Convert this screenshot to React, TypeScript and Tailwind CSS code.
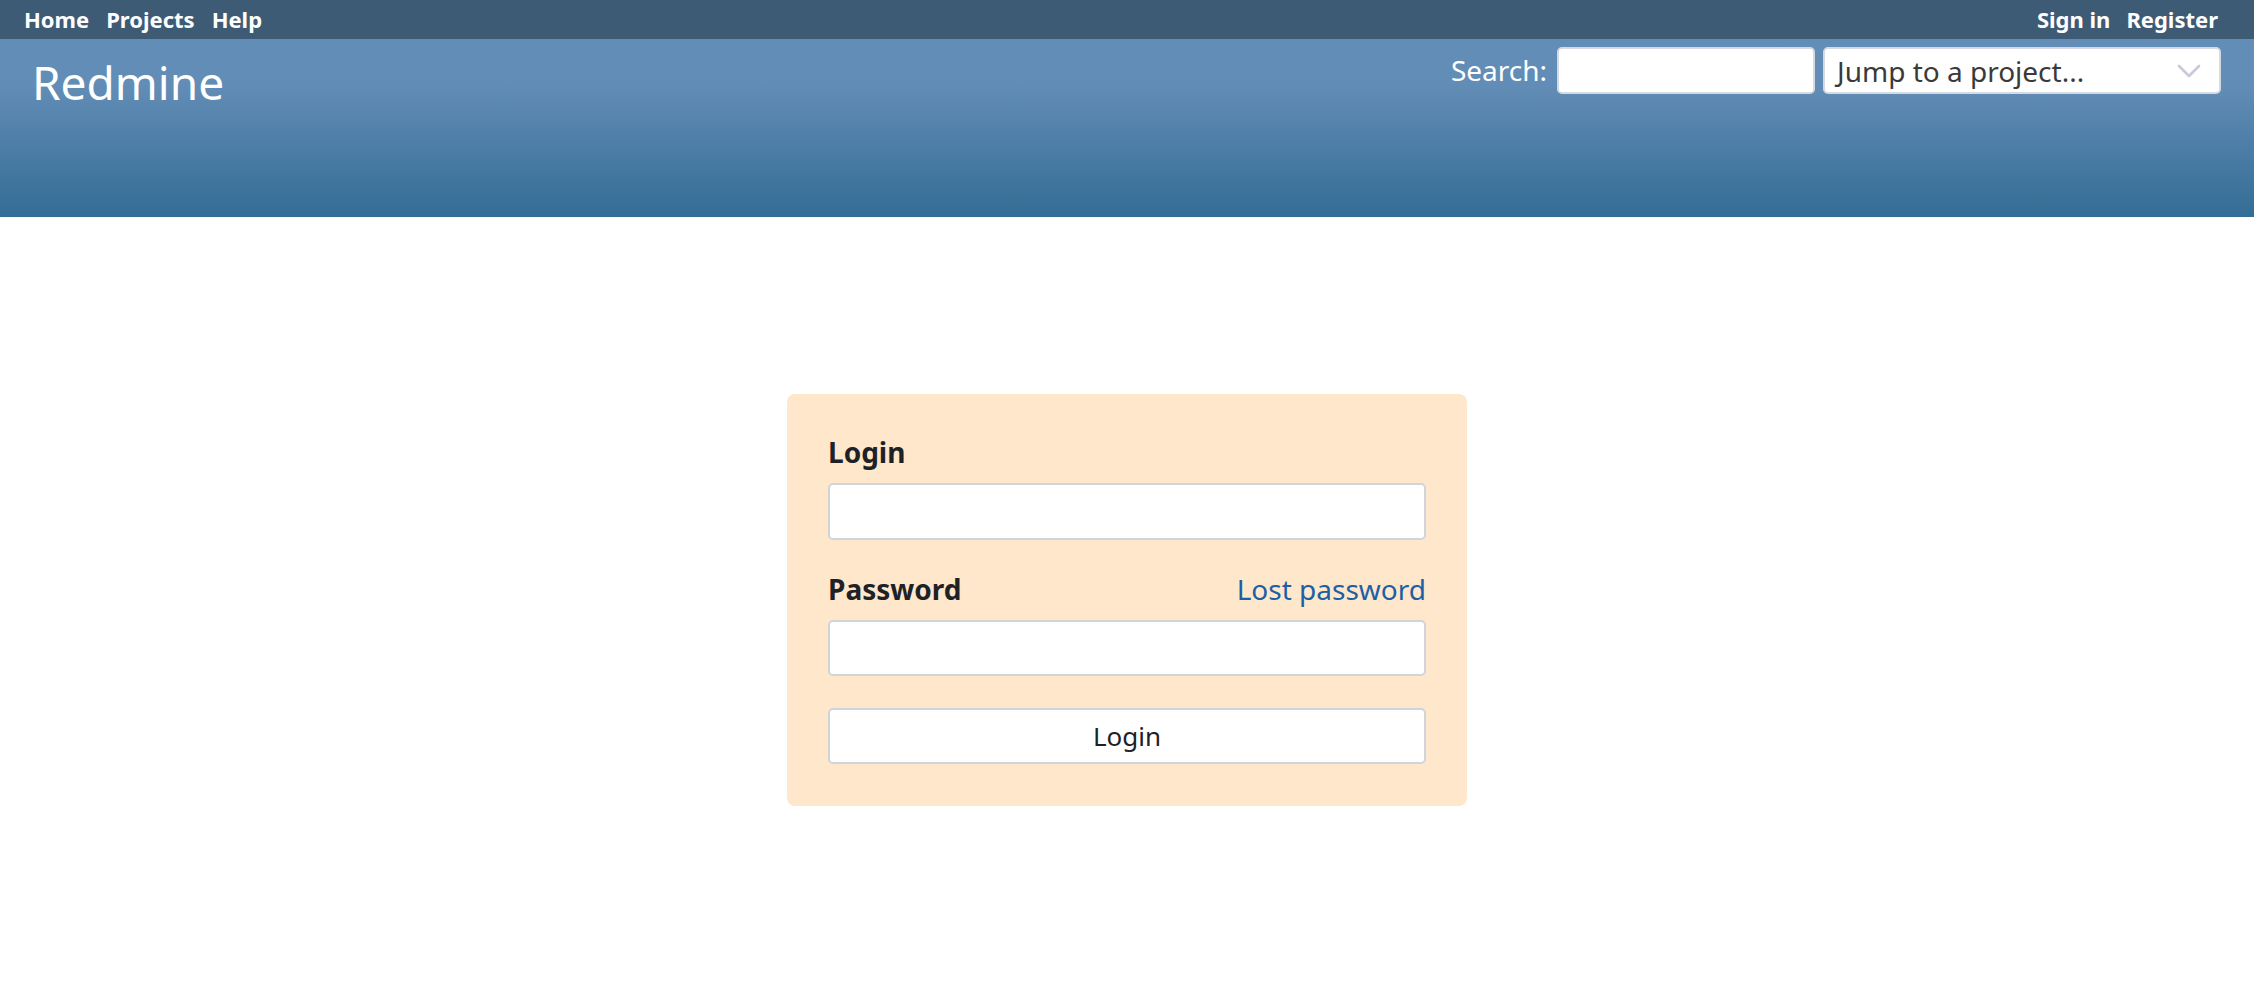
import { ChevronDown } from 'lucide-react';

const font = { fontFamily: '"Noto Sans", "Open Sans", sans-serif' };

function TopMenu() {
  return (
    <div className="h-[39px] bg-[#3e5b76] flex items-center justify-between pl-[24px] pr-[36px] text-white text-[22px] font-bold">
      <div className="flex gap-[17px]">
        <a>Home</a>
        <a>Projects</a>
        <a>Help</a>
      </div>
      <div className="flex gap-[16px]">
        <a>Sign in</a>
        <a>Register</a>
      </div>
    </div>
  );
}

function Header() {
  return (
    <div className="h-[178px] bg-gradient-to-b from-[#628db6] from-25% to-[#336d95] flex justify-between pl-[32px] pr-[33px]">
      <h1 className="mt-[20px] text-[46px] leading-none text-white font-normal">Redmine</h1>
      <div className="mt-[8px] flex items-start">
        <label className="text-white text-[28px] leading-[47px] mr-[10px]">Search:</label>
        <input className="w-[258px] h-[47px] bg-white rounded-[5px] border-2 border-[#d6d9df] outline-none" />
        <div className="ml-[8px] w-[398px] h-[47px] bg-white rounded-[5px] border-2 border-[#d6d9df] flex items-center justify-between pl-[12px] pr-[10px]">
          <span className="text-[28px] text-[#3a3a3a]">Jump to a project...</span>
          <ChevronDown className="w-[40px] h-[40px] text-[#c9c8dc]" strokeWidth={1.6} />
        </div>
      </div>
    </div>
  );
}

function LoginForm() {
  return (
    <div className="w-[680px] bg-[#ffe7cb] rounded-[8px] pt-[37px] pb-[42px] px-[41px]">
      <label className="block text-[28px] leading-[42px] font-bold text-[#1e2227]">Login</label>
      <input className="mt-[10px] w-full h-[57px] bg-white rounded-[5px] border-2 border-[#d0d4db] outline-none" />
      <div className="mt-[28px] flex justify-between items-center">
        <label className="text-[28px] leading-[42px] font-bold text-[#1e2227]">Password</label>
        <a className="text-[28px] leading-[42px] text-[#1d5fa6]">Lost password</a>
      </div>
      <input type="password" className="mt-[10px] w-full h-[56px] bg-white rounded-[5px] border-2 border-[#d0d4db] outline-none" />
      <button className="mt-[32px] w-full h-[56px] bg-white rounded-[5px] border-2 border-[#d0d4db] text-[26px] text-[#1e2227]">
        Login
      </button>
    </div>
  );
}

export default function App() {
  return (
    <div className="min-h-[1004px] bg-white" style={font}>
      <TopMenu />
      <Header />
      <div className="flex justify-center pt-[177px]">
        <LoginForm />
      </div>
    </div>
  );
}
